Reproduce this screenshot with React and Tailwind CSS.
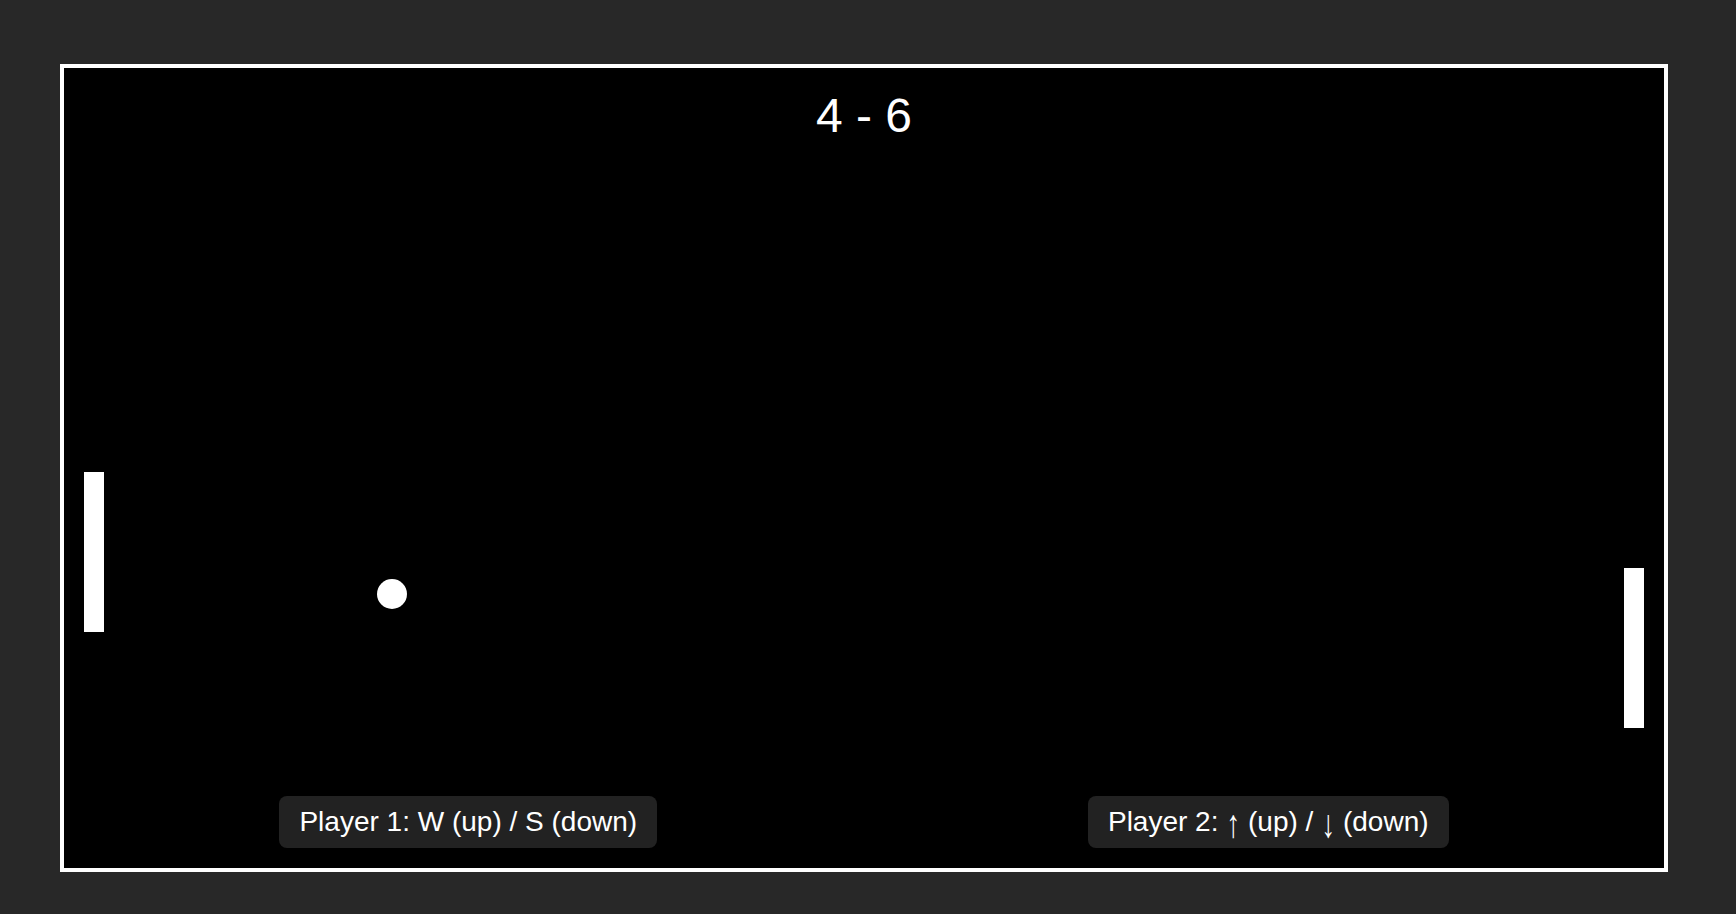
export default function App() {
  const font = { fontFamily: '"Liberation Sans", Arial, Helvetica, sans-serif' };
  return (
    <div className="w-full h-[914px] bg-[#282828] pt-[64px] pl-[60px] overflow-hidden" style={font}>
      <div className="relative w-[1608px] h-[808px] border-4 border-white bg-black">
        <div className="absolute top-5 inset-x-0 text-center text-white text-[48px] leading-[55px]">4 - 6</div>
        <div className="absolute left-[20px] top-[404px] w-[20px] h-[160px] bg-white" />
        <div className="absolute left-[1560px] top-[500px] w-[20px] h-[160px] bg-white" />
        <div className="absolute left-[313px] top-[511px] w-[30px] h-[30px] rounded-full bg-white" />
        <div className="absolute bottom-5 inset-x-0 flex justify-around">
          <div className="bg-[#222222] rounded-lg px-5 py-[10px] text-[28px] leading-[32px] text-white">Player 1: W (up) / S (down)</div>
          <div className="bg-[#222222] rounded-lg px-5 py-[10px] text-[28px] leading-[32px] text-white">
            Player 2: <span className="inline-block scale-y-[1.4] translate-y-[2px]">↑</span> (up) / <span className="inline-block scale-y-[1.4] translate-y-[2px]">↓</span> (down)
          </div>
        </div>
      </div>
    </div>
  );
}
